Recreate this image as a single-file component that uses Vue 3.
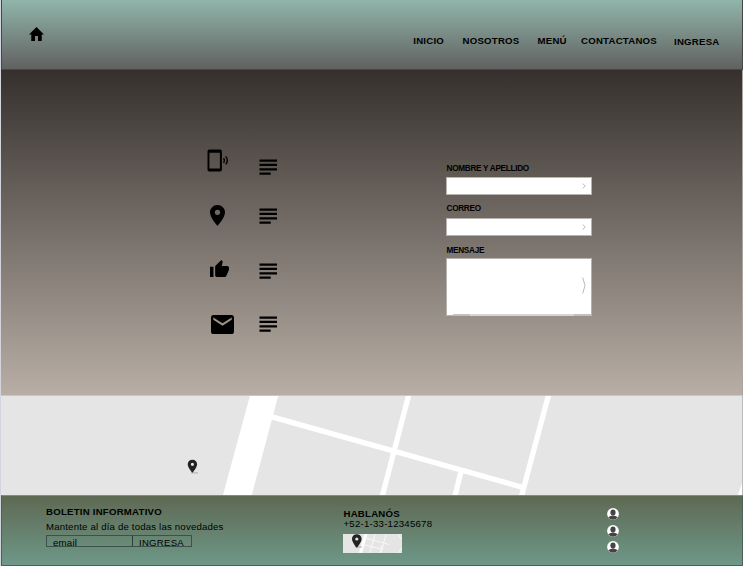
<script setup>
const nav = [
  { label: 'INICIO', cls: 'n-inicio' },
  { label: 'NOSOTROS', cls: 'n-nosotros' },
  { label: 'MENÚ', cls: 'n-menu' },
  { label: 'CONTACTANOS', cls: 'n-contact' },
  { label: 'INGRESA', cls: 'n-ingresa' },
]
const people = [1, 2, 3]
const contacts = ['phone', 'pin', 'like', 'mail']
</script>

<template>
  <div class="page">
    <header class="header">
      <svg class="home" viewBox="2 3 20 17" preserveAspectRatio="none"><path d="M10 20v-6h4v6h5v-8h3L12 3 2 12h3v8z" /></svg>
      <nav class="nav">
        <a v-for="n in nav" :key="n.cls" :class="n.cls">{{ n.label }}</a>
      </nav>
    </header>

    <main class="main">
      <div class="contacts">
        <div v-for="c in contacts" :key="c" class="contact" :class="c">
          <span class="glyph">
            <svg v-if="c === 'phone'" width="22" height="23" viewBox="0 0 22 23">
              <path fill-rule="evenodd" d="M2.400 0.600H13a1.800 1.800 0 0 1 1.900 1.800v18.400a1.800 1.800 0 0 1-1.900 1.800H2.400a1.800 1.800 0 0 1-1.900-1.800V2.400a1.800 1.800 0 0 1 1.900-1.800zM2.400 3.800v15.600h10.500V3.800z" />
              <path class="wave" d="M16.500 9.300q1.800 2.200 0 4.500M18.700 7.400q3.300 4 0 8" />
            </svg>
            <svg v-else-if="c === 'pin'" width="15" height="21" viewBox="5 2 14 20" preserveAspectRatio="none">
              <path d="M12 2C8.130 2 5 5.130 5 9c0 5.250 7 13 7 13s7-7.750 7-13c0-3.870-3.130-7-7-7zm0 9.500a2.500 2.500 0 0 1 0-5 2.500 2.500 0 0 1 0 5z" />
            </svg>
            <svg v-else-if="c === 'like'" width="19" height="17" viewBox="1 1 22 20" preserveAspectRatio="none">
              <path d="M1 21h4V9H1v12zm22-11c0-1.100-.9-2-2-2h-6.310l.95-4.570.03-.32c0-.41-.17-.79-.44-1.060L14.170 1 7.590 7.590C7.220 7.950 7 8.450 7 9v10c0 1.100.9 2 2 2h9c.83 0 1.540-.5 1.840-1.220l3.020-7.050c.09-.23.14-.47.14-.73v-2z" />
            </svg>
            <svg v-else width="23" height="19" viewBox="2 4 20 16" preserveAspectRatio="none">
              <path d="M20 4H4c-1.100 0-2 .9-2 2v12c0 1.100.9 2 2 2h16c1.100 0 2-.9 2-2V6c0-1.100-.9-2-2-2zm0 4l-8 5-8-5V6l8 5 8-5v2z" />
            </svg>
          </span>
          <svg class="lines" width="19" height="17" viewBox="0 0 19 17">
            <path d="M.5 .5h17.500v2.300H.5zM.5 4.800h17.500v2.300H.5zM.5 9.200h17.500v2.300H.5zM.5 13.400h11.200v2.300H.5z" />
          </svg>
        </div>
      </div>

      <form class="form" @submit.prevent>
        <label>NOMBRE Y APELLIDO</label>
        <div class="field"><svg width="4" height="6" viewBox="0 0 4 6"><path d="M.7.5 3.300 3 .7 5.500" /></svg></div>
        <label class="l-correo">CORREO</label>
        <div class="field"><svg width="4" height="6" viewBox="0 0 4 6"><path d="M.7.5 3.300 3 .7 5.500" /></svg></div>
        <label class="l-mensaje">MENSAJE</label>
        <div class="field area">
          <svg width="4" height="17" viewBox="0 0 4 17"><path d="M.7.5 3 8.500 .7 16.500" /></svg>
          <i class="scroll"></i>
        </div>
      </form>
    </main>

    <section class="map">
      <svg class="streets" width="741" height="99" viewBox="1 396 741 99">
        <path class="road" d="M250 395.500h28.300L251.500 496H222.700z" />
        <path class="street" d="M272 416.900 522 487.200M409 394 381.800 498M548.800 394 521 498M461 471.500 454.500 498" />
        <path class="road" d="M743 480v17h-5.800z" />
      </svg>
      <svg class="marker" width="14" height="15" viewBox="0 0 14 15">
        <path class="shade" d="M4 13.900h7" />
        <path class="pin-dark" fill-rule="evenodd" d="M5.400.7C2.700.7.7 2.700.7 5.300c0 3.400 4.700 8.600 4.700 8.600s4.700-5.200 4.700-8.600C10.100 2.700 8.100.7 5.400.7zm0 3a1.600 1.600 0 1 1 0 3.200 1.600 1.600 0 0 1 0-3.200z" />
      </svg>
    </section>

    <footer class="footer">
      <div class="news">
        <h2>BOLETIN INFORMATIVO</h2>
        <p>Mantente al día de todas las novedades</p>
        <div class="subscribe"><span class="email">email</span><span class="send">INGRESA</span></div>
      </div>
      <div class="talk">
        <h2>HABLANÓS</h2>
        <p>+52-1-33-12345678</p>
        <svg class="mini" width="59" height="19" viewBox="0 0 59 19">
          <rect width="59" height="19" fill="#e5e5e5" />
          <path class="mini-road" d="M23 0 17.500 19" />
          <path class="mini-street" d="M22 4 46 10.500M32 0 27 19M43 0 38 19M39 11 37 19M22 11 38 15M55 0 58 5M59 14 55 19" />
          <path class="shade" d="M12 13h7" />
          <path class="pin-dark" fill-rule="evenodd" d="M13.800.2C11 .2 9 2.200 9 4.900c0 3.500 4.800 8.800 4.800 8.800s4.800-5.300 4.800-8.800C18.600 2.200 16.600.2 13.800.2zm0 3.200a1.600 1.600 0 1 1 0 3.200 1.600 1.600 0 0 1 0-3.200z" />
        </svg>
      </div>
      <div class="people">
        <svg v-for="p in people" :key="p" width="12" height="12" viewBox="0 0 12 12">
          <circle cx="6" cy="6" r="5.900" fill="#fff" />
          <ellipse cx="6" cy="4.500" rx="2.600" ry="3" fill="#444" />
          <path d="M1.200 9.300Q3.500 7.600 6 7.600t4.800 1.700Q8.900 11.800 6 11.800T1.200 9.300z" fill="#444" />
        </svg>
      </div>
    </footer>
  </div>
</template>

<style>
body {
  margin: 0;
  background: #fff;
}
</style>

<style scoped>
.page {
  box-sizing: border-box;
  width: 743px;
  height: 566px;
  padding-left: 1px;
  overflow: hidden;
  background: #d3d5dd;
  font-family: "Liberation Sans", Arial, sans-serif;
  font-size: 9.650px;
  letter-spacing: 0.230px;
  color: #000;
}
svg {
  display: block;
}
.header {
  box-sizing: border-box;
  display: flex;
  justify-content: space-between;
  height: 70px;
  padding: 27px 22.500px 0 28px;
  background: linear-gradient(#91b5aa, #616161);
  border: 1px solid #454745;
  border-top: 0;
}
.home {
  width: 15px;
  height: 14px;
  margin-left: -1px;
}
.nav {
  display: flex;
  padding-top: 8px;
  font-weight: bold;
  line-height: 12px;
  white-space: nowrap;
}
.n-inicio {
  width: 49.300px;
}
.n-nosotros {
  width: 75px;
}
.n-menu {
  width: 43.500px;
}
.n-contact {
  width: 93px;
}
.n-ingresa {
  padding-top: 1px;
}
.main {
  box-sizing: border-box;
  display: flex;
  height: 325px;
  padding-left: 206px;
  background: linear-gradient(#35302d, #b8aea5);
  border-right: 1px solid #aaa69f;
}
.contacts {
  display: grid;
  grid-template-rows: 55px 55px 54px 54px;
  width: 239px;
  padding-top: 79px;
  align-content: start;
}
.contact {
  display: flex;
  align-items: flex-start;
}
.glyph {
  width: 52px;
}
.lines {
  margin-top: 10px;
}
.pin .glyph {
  padding: 1px 0 0 3.300px;
  width: 48.700px;
}
.pin .lines {
  margin-top: 4px;
}
.like .glyph {
  padding: 1px 0 0 3.300px;
  width: 48.700px;
}
.like .lines {
  margin-top: 4px;
}
.mail .glyph {
  padding: 2px 0 0 4px;
  width: 48px;
}
.mail .lines {
  margin-top: 3px;
}
.wave {
  fill: none;
  stroke: #000;
  stroke-width: 1.400;
}
.form {
  width: 146px;
  padding-top: 93px;
}
label {
  display: block;
  height: 14px;
  padding-left: 0.500px;
  font-size: 8.200px;
  line-height: 11px;
  font-weight: bold;
  letter-spacing: -0.280px;
}
.l-correo {
  margin-top: 8px;
  height: 15px;
}
.l-mensaje {
  margin-top: 9px;
  height: 14px;
}
.field {
  box-sizing: border-box;
  display: flex;
  align-items: center;
  justify-content: flex-end;
  width: 146px;
  height: 18px;
  padding: 0 5px 1px 0;
  background: #fff;
  border: 1px solid #b6b3b0;
}
.field path {
  fill: none;
  stroke: #b9b9b9;
  stroke-width: 1;
}
.area {
  position: relative;
  height: 58px;
  margin-top: -1px;
  padding-bottom: 3px;
}
.scroll {
  position: absolute;
  left: 6px;
  right: 0;
  bottom: -1px;
  height: 2px;
  background: linear-gradient(90deg, #bfc0c4 12%, #d5d6d8 12%, #d5d6d8 88%, #bfc0c4 88%);
}
.map {
  box-sizing: border-box;
  position: relative;
  height: 100px;
  background: #e5e5e5;
  border-top: 1px solid #cbc6c1;
  border-right: 1px solid #bbb;
}
.road {
  fill: #fff;
}
.street {
  fill: none;
  stroke: #fff;
  stroke-width: 5.300;
}
.marker {
  position: absolute;
  left: 186px;
  top: 63px;
}
.pin-dark {
  fill: #222;
}
.shade {
  stroke: #aaa;
  stroke-width: 1;
}
.footer {
  box-sizing: border-box;
  display: flex;
  height: 71px;
  padding-left: 44px;
  background: linear-gradient(#5e6953, #6e9888);
  border: 1px solid #4e6159;
  border-top-color: #868b80;
}
h2,
p {
  margin: 0;
  font-size: inherit;
  white-space: nowrap;
}
.news {
  width: 297px;
  padding-top: 10px;
}
.news h2,
.news p {
  line-height: 11px;
}
.news p {
  margin-top: 4px;
  letter-spacing: 0.180px;
}
.subscribe {
  box-sizing: border-box;
  display: flex;
  width: 146px;
  height: 12px;
  margin-top: 3px;
  border: 1px solid #3e5148;
  line-height: 14px;
}
.email {
  box-sizing: border-box;
  width: 86px;
  padding-left: 6px;
  border-right: 1px solid #2f3c36;
}
.send {
  padding-left: 6px;
}
.talk {
  width: 264px;
  padding-top: 13px;
  line-height: 10px;
}
.talk h2,
.talk p {
  padding-left: 0.500px;
}
.mini {
  margin-top: 5px;
}
.mini-road {
  stroke: #fff;
  stroke-width: 3;
}
.mini-street {
  fill: none;
  stroke: #f8f8f8;
  stroke-width: 1;
}
.people {
  display: grid;
  align-content: start;
  gap: 4.700px;
  padding-top: 12px;
}
</style>
